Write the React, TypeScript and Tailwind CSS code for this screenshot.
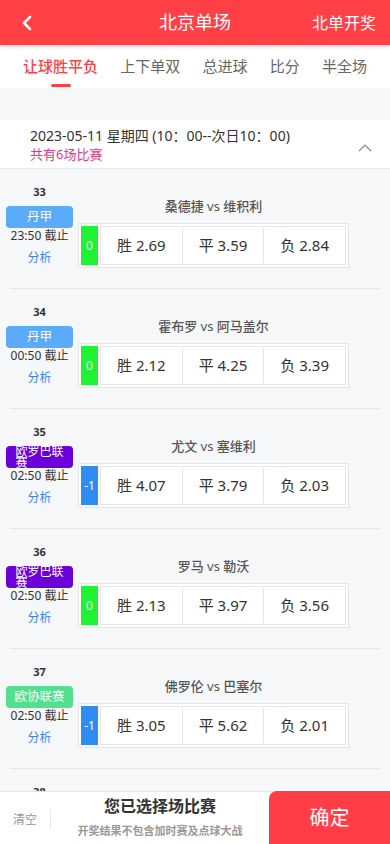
import React from "react";

type Match = {
  no: number;
  league: string;
  leagueColor: string;
  time: string;
  home: string;
  away: string;
  handicap: string;
  odds: [string, string, string];
};

const matches: Match[] = [
  { no: 33, league: "丹甲", leagueColor: "bg-[#5aabf8]", time: "23:50", home: "桑德捷", away: "维积利", handicap: "0", odds: ["2.69", "3.59", "2.84"] },
  { no: 34, league: "丹甲", leagueColor: "bg-[#5aabf8]", time: "00:50", home: "霍布罗", away: "阿马盖尔", handicap: "0", odds: ["2.12", "4.25", "3.39"] },
  { no: 35, league: "欧罗巴联赛", leagueColor: "bg-[#6c00d9]", time: "02:50", home: "尤文", away: "塞维利", handicap: "-1", odds: ["4.07", "3.79", "2.03"] },
  { no: 36, league: "欧罗巴联赛", leagueColor: "bg-[#6c00d9]", time: "02:50", home: "罗马", away: "勒沃", handicap: "0", odds: ["2.13", "3.97", "3.56"] },
  { no: 37, league: "欧协联赛", leagueColor: "bg-[#52e08e]", time: "02:50", home: "佛罗伦", away: "巴塞尔", handicap: "-1", odds: ["3.05", "5.62", "2.01"] },
  { no: 38, league: "欧协联赛", leagueColor: "bg-[#52e08e]", time: "02:50", home: "西汉姆", away: "阿尔克", handicap: "-1", odds: ["1.62", "3.90", "4.10"] },
];

const tabs = ["让球胜平负", "上下单双", "总进球", "比分", "半全场"];

function MatchRow({ m }: { m: Match }) {
  const labels = ["胜", "平", "负"];
  const wraps = m.league.length > 4;
  return (
    <div>
      <div className="flex h-[119px]">
        <div className="ml-[6px] flex w-[67px] flex-col items-center pt-[15px]">
          <div className="h-[16px] text-[11px] font-bold leading-[16px] text-[#333]">{m.no}</div>
          <div
            className={`mt-[6px] flex h-[22px] w-[67px] justify-center overflow-visible rounded-[4px] text-white ${m.leagueColor} ${
              wraps ? "items-start pt-[1px] text-[12px] leading-[10.5px]" : "items-center text-[12.5px] leading-[22px]"
            }`}
          >
            <span className={wraps ? "block w-[48px] text-left" : ""}>{m.league}</span>
          </div>
          <div className="h-[16px] text-[12px] leading-[16px] text-[#333]">{m.time} 截止</div>
          <div className="mt-[6px] h-[16px] text-[12px] leading-[16px] text-[#3b82f6]">分析</div>
        </div>
        <div className="ml-[5px] flex w-[271px] flex-col items-center pt-[28px]">
          <div className="h-[18px] text-[13px] font-medium leading-[18px] text-[#555]">
            {m.home} <span className="font-normal">vs</span> {m.away}
          </div>
          <div className="mt-[8px] flex h-[45px] w-[271px] border border-[#e4e4e4] bg-white p-[2px]">
            <div
              className={`flex w-[17px] items-center justify-center text-[12px] text-white ${
                m.handicap === "0" ? "bg-[#1ef233]" : "bg-[#2f8cf0]"
              }`}
            >
              {m.handicap}
            </div>
            <div className="ml-[2px] flex flex-1 items-stretch border border-[#e6e6e6] bg-white">
              {m.odds.map((o, i) => (
                <React.Fragment key={i}>
                  {i > 0 && <div className="my-[1px] w-px bg-[#e4e4e4]" />}
                  <div className="flex flex-1 items-center justify-center text-[15px] text-[#333]">
                    {labels[i]} {o}
                  </div>
                </React.Fragment>
              ))}
            </div>
          </div>
        </div>
      </div>
      <div className="mx-[10px] h-px bg-[#e5e6e8]" />
    </div>
  );
}

export default function App() {
  return (
    <div
      className="min-h-screen bg-[#f6f7f9]"
      style={{ fontFamily: '"Noto Sans", "Noto Sans CJK SC", sans-serif' }}
    >
      <header className="relative z-10 flex h-[45px] items-center bg-[#ff4047] shadow-[0_2px_4px_rgba(0,0,0,0.15)]">
        <div className="flex w-[80px] pl-[21px]">
          <svg width="12" height="16" viewBox="0 0 12 16" fill="none">
            <path d="M9 2L3 8l6 6" stroke="white" strokeWidth="2.6" strokeLinecap="round" strokeLinejoin="round" />
          </svg>
        </div>
        <div className="flex-1 text-center text-[18px] text-white">北京单场</div>
        <div className="w-[80px] pr-[14px] text-right text-[16px] text-white">北单开奖</div>
      </header>

      <nav className="flex h-[43px] items-center justify-between bg-white px-[23px]">
        {tabs.map((t, i) => (
          <div key={t} className="relative flex h-full items-center">
            <span className={`text-[15px] ${i === 0 ? "font-medium text-[#ff3f47]" : "text-[#666]"}`}>{t}</span>
            {i === 0 && (
              <span className="absolute bottom-[1px] left-1/2 h-[3px] w-[20px] -translate-x-1/2 rounded-full bg-[#ff3f47]" />
            )}
          </div>
        ))}
      </nav>

      <div className="h-[32px]" />

      <section className="flex h-[49px] items-center border-b border-[#e8e9eb] bg-white pl-[30px] pr-[18px]">
        <div className="flex-1">
          <div className="text-[14px] leading-[19px] text-[#333]">2023-05-11 星期四 (10：00--次日10：00)</div>
          <div className="text-[13px] leading-[18px] text-[#e0378c]">共有6场比赛</div>
        </div>
        <svg width="14" height="9" viewBox="0 0 14 9" fill="none" className="mt-[6px]">
          <path d="M1 8l6-6 6 6" stroke="#888" strokeWidth="1.2" />
        </svg>
      </section>

      <div>
        {matches.map((m) => (
          <MatchRow key={m.no} m={m} />
        ))}
      </div>

      <footer className="fixed bottom-0 left-0 right-0 z-20 flex h-[53px] items-stretch border-t border-[#e5e5e5] bg-white">
        <div className="flex w-[50px] items-center justify-center">
          <span className="mt-[4px] text-[12px] text-[#999]">清空</span>
        </div>
        <div className="mt-[17px] h-[18px] w-px bg-[#e5e5e5]" />
        <div className="flex flex-1 flex-col items-center pt-[3px]">
          <div className="text-[16px] font-bold leading-[22px] text-[#333]">您已选择场比赛</div>
          <div className="mt-[6px] text-[11px] font-bold leading-[16px] text-[#999]">开奖结果不包含加时赛及点球大战</div>
        </div>
        <button
          type="button"
          className="-mt-px w-[121px] rounded-tl-[8px] bg-[#ff3d46] text-[20px] text-white"
        >
          确定
        </button>
      </footer>
    </div>
  );
}
